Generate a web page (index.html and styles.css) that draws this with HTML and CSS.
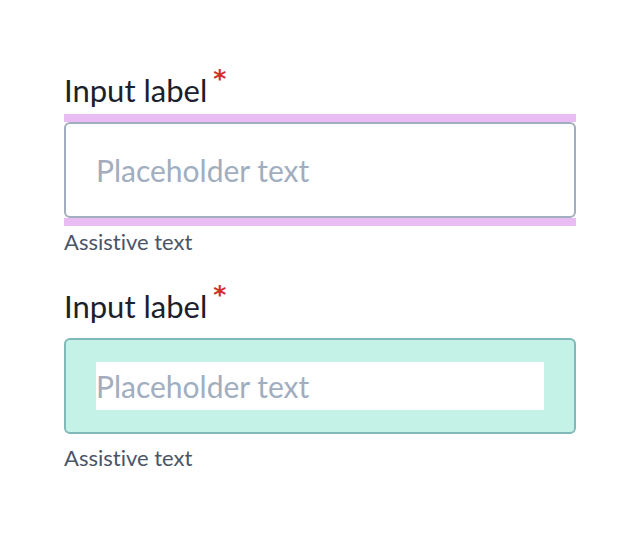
FILE: index.html
```html
<!DOCTYPE html>
<html lang="en">
<head>
<meta charset="utf-8">
<title>Input fields</title>
<link rel="stylesheet" href="styles.css">
</head>
<body>
<main class="form">
  <div class="field">
    <label class="label" for="f1">Input label<span class="req">*</span></label>
    <div class="margin-hl">
      <input id="f1" class="input" type="text" placeholder="Placeholder text">
    </div>
    <p class="assist">Assistive text</p>
  </div>
  <div class="field">
    <label class="label" for="f2">Input label<span class="req">*</span></label>
    <div class="margin-plain">
      <input id="f2" class="input input--padding" type="text" placeholder="Placeholder text">
    </div>
    <p class="assist">Assistive text</p>
  </div>
</main>
</body>
</html>
```

FILE: styles.css
```css
* { box-sizing: border-box; }

html, body {
  margin: 0;
  background: #ffffff;
}

body {
  font-family: Lato, "Open Sans", sans-serif;
  font-variant-ligatures: none;
}

.form {
  display: flex;
  flex-direction: column;
  gap: 33px;
  width: 512px;
  margin-left: 64px;
  padding-top: 72px;
}

.field {
  display: flex;
  flex-direction: column;
}

.label {
  display: block;
  font-size: 31px;
  line-height: 36px;
  color: #1a202c;
  margin-bottom: 6px;
}

.req {
  font-family: "DejaVu Sans", sans-serif;
  font-weight: 700;
  color: #d0312d;
  font-size: 25px;
  margin-left: 6px;
  vertical-align: 15px;
  line-height: 0;
}

.margin-hl {
  border-top: 8px solid #e9bdf4;
  border-bottom: 8px solid #e9bdf4;
}

.margin-plain {
  padding: 8px 0;
}

.input {
  display: block;
  width: 100%;
  height: 96px;
  margin: 0;
  padding: 22px 30px;
  border: 2px solid #a0aec0;
  border-radius: 6px;
  background: #ffffff;
  font-family: Lato, "Open Sans", sans-serif;
  font-size: 30px;
  line-height: 48px;
  color: #1a202c;
  outline: none;
}

.input::placeholder {
  color: #a0aec0;
  opacity: 1;
}

.input--padding {
  border-color: #81b9bb;
  background: linear-gradient(#ffffff, #ffffff) content-box, #c5f2e7;
}

.assist {
  margin: 3px 0 0;
  font-size: 22px;
  line-height: 26px;
  color: #4a5568;
}
```
